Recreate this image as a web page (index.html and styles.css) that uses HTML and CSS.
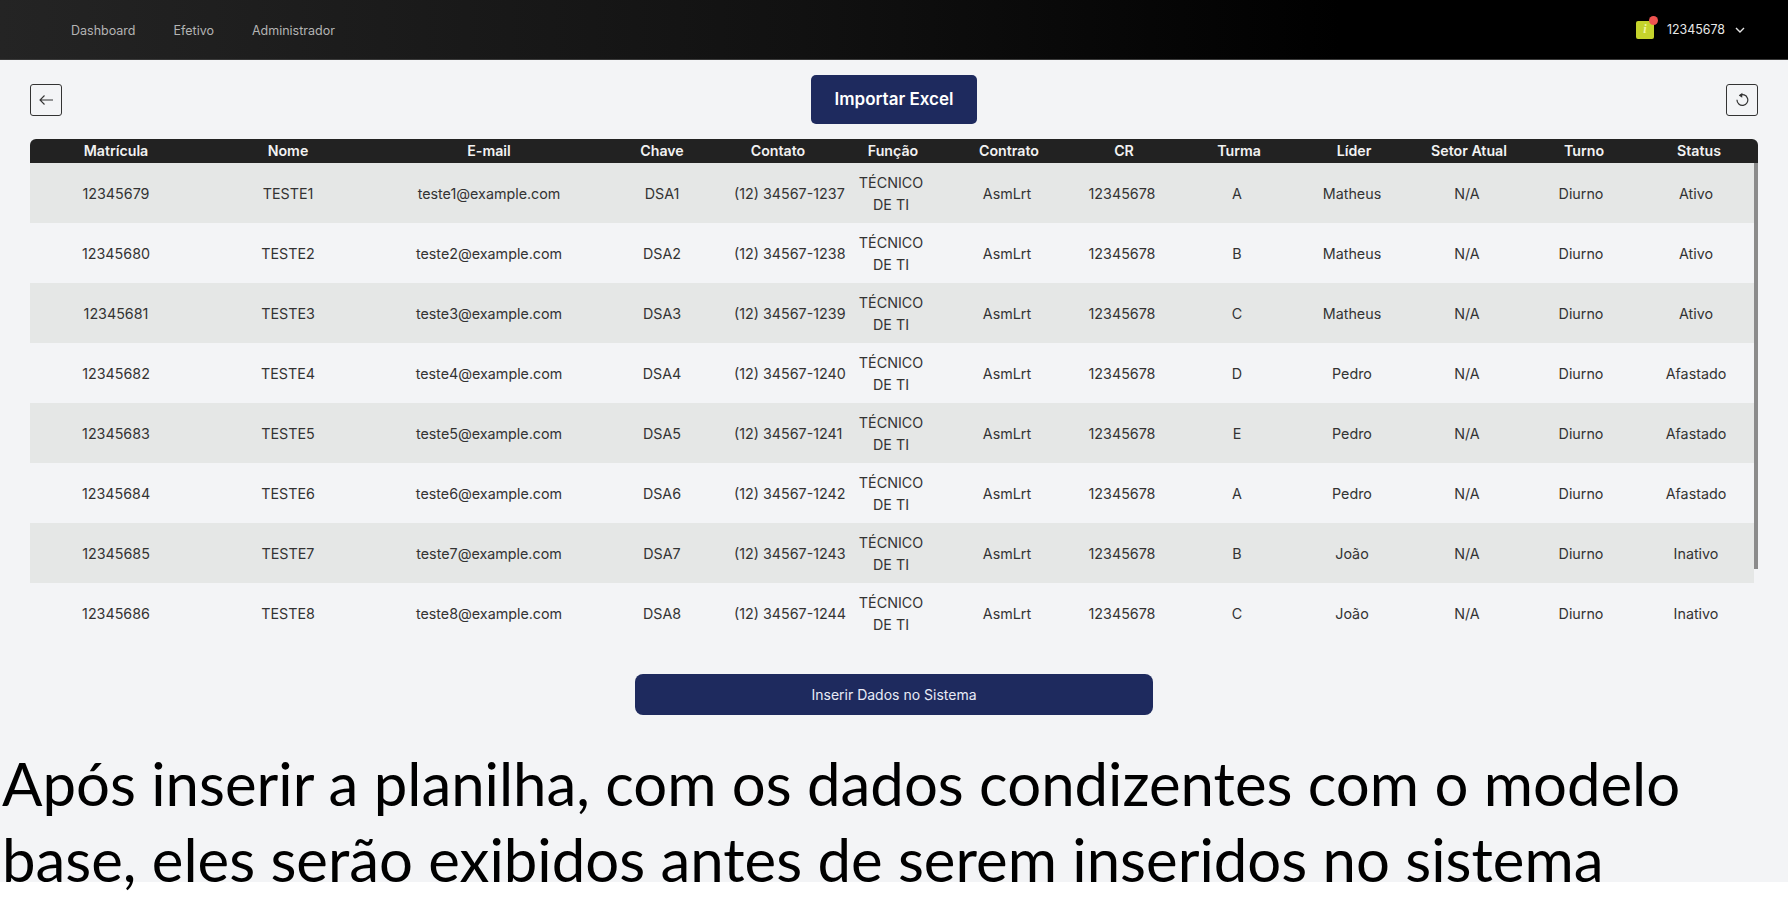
FILE: index.html
```html
<!DOCTYPE html>
<html lang="pt-BR">
<head>
  <meta charset="UTF-8">
  <title>Importar Excel</title>
  <link rel="stylesheet" href="styles.css">
</head>
<body>
  <nav class="navbar">
    <div class="nav-links">
      <a>Dashboard</a>
      <a>Efetivo</a>
      <a>Administrador</a>
    </div>
    <div class="nav-user">
      <span class="notify"><i>i</i><b class="notify-dot"></b></span>
      <span>12345678</span>
      <svg class="chevron" width="10" height="6" viewBox="0 0 10 6"><path d="M1 1l4 4 4-4" fill="none" stroke="#e5e5e5" stroke-width="1.4"/></svg>
    </div>
  </nav>

  <main class="page">
    <div class="toolbar">
      <button class="icon-btn">
        <svg width="16" height="12" viewBox="0 0 16 12"><path d="M15 6H2M6.5 1.5L2 6l4.5 4.5" fill="none" stroke="#333" stroke-width="1.1"/></svg>
      </button>
      <button class="import-btn">Importar Excel</button>
      <button class="icon-btn">
        <svg width="14" height="15" viewBox="0 0 14 15"><path d="M4.6 3.4a5.4 5.4 0 1 1-2.6 4.4" fill="none" stroke="#333" stroke-width="1.2"/><path d="M7.4 .8L3.8 3.4l3.4 2.4z" fill="#333"/></svg>
      </button>
    </div>

    <table class="grid head-table">
      <colgroup>
        <col class="h1"><col class="h2"><col class="h3"><col class="h4"><col class="h5"><col class="h6"><col class="h7"><col class="h8"><col class="h9"><col class="h10"><col class="h11"><col class="h12"><col class="h13">
      </colgroup>
      <thead>
        <tr><th>Matrícula</th><th>Nome</th><th>E-mail</th><th>Chave</th><th>Contato</th><th>Função</th><th>Contrato</th><th>CR</th><th>Turma</th><th>Líder</th><th>Setor Atual</th><th>Turno</th><th>Status</th></tr>
      </thead>
    </table>

    <div class="table-scroll">
      <span class="scroll-thumb"></span>
      <table class="grid body-table">
        <colgroup>
          <col class="b1"><col class="b2"><col class="b3"><col class="b4"><col class="b5"><col class="b6"><col class="b7"><col class="b8"><col class="b9"><col class="b10"><col class="b11"><col class="b12"><col class="b13">
        </colgroup>
        <tbody id="rows"></tbody>
      </table>
    </div>

    <div class="submit-row">
      <button class="submit-btn">Inserir Dados no Sistema</button>
    </div>

    <p class="caption">Após inserir a planilha, com os dados condizentes com o modelo base, eles serão exibidos antes de serem inseridos no sistema</p>
  </main>

  <script>
    const people = [
      ['A', 'Matheus', 'Ativo'],
      ['B', 'Matheus', 'Ativo'],
      ['C', 'Matheus', 'Ativo'],
      ['D', 'Pedro', 'Afastado'],
      ['E', 'Pedro', 'Afastado'],
      ['A', 'Pedro', 'Afastado'],
      ['B', 'João', 'Inativo'],
      ['C', 'João', 'Inativo']
    ];

    let html = '';
    people.forEach((p, i) => {
      const n = i + 1;
      html += `<tr>
        <td>${12345679 + i}</td><td>TESTE${n}</td><td>teste${n}@example.com</td><td>DSA${n}</td>
        <td class="nowrap">(12) 34567-${1237 + i}</td><td class="func">TÉCNICO DE TI</td><td>AsmLrt</td><td>12345678</td>
        <td>${p[0]}</td><td>${p[1]}</td><td>N/A</td><td>Diurno</td><td>${p[2]}</td>
      </tr>`;
    });
    document.getElementById('rows').innerHTML = html;
  </script>
</body>
</html>
```

FILE: styles.css
```css
html, body { margin: 0; padding: 0; height: 899px; overflow: hidden; background: #fff; }
body { font-family: Inter, "Liberation Sans", sans-serif; color: #2b2b2b; }

.navbar { height: 59px; border-bottom: 1px solid #3a3a3a; background: linear-gradient(90deg, #242424 0%, #111 45%, #000 75%); display: flex; align-items: center; justify-content: space-between; padding: 0 30px 0 71px; }
.nav-links { display: flex; gap: 38px; padding-top: 2px; }
.nav-links a { color: #b4b4b4; font-size: 12.5px; }
.nav-user { display: flex; align-items: center; color: #e8e8e8; font-size: 12.4px; margin-right: 13px; }
.notify { position: relative; width: 18px; height: 18px; margin-right: 13px; border-radius: 2px; background: #c5d32c; display: flex; align-items: center; justify-content: center; }
.notify i { color: #f3f6a0; font: italic bold 12px "Liberation Serif", serif; }
.notify-dot { position: absolute; top: -5px; right: -4px; width: 9px; height: 9px; border-radius: 50%; background: #ef5350; }
.chevron { margin-left: 10px; }

.page { height: 822px; background: #f3f4f6; }
.toolbar { display: flex; align-items: center; justify-content: space-between; padding: 15px 30px; height: 49px; }
.icon-btn { width: 32px; height: 32px; padding: 0; background: transparent; border: 1px solid #333; border-radius: 3px; display: flex; align-items: center; justify-content: center; }
.import-btn { width: 166px; height: 49px; padding: 0 0 2px; background: #1e2a5e; color: #fff; border: 0; border-radius: 5px; font-family: inherit; font-size: 17px; font-weight: 600; }

.grid { table-layout: fixed; border-collapse: collapse; text-align: center; }
.head-table { width: 1728px; margin-left: 30px; background: #222; border-radius: 6px 6px 0 0; overflow: hidden; }
.head-table th { height: 24px; padding: 0 0 2px; box-sizing: border-box; color: #f2f2f2; font-size: 14.2px; font-weight: 600; }
.h1, .h2 { width: 172px; } .h3 { width: 230px; } .h4, .h5 { width: 116px; } .h6 { width: 114px; }
.h7, .h9, .h11, .h13 { width: 118px; } .h8, .h10, .h12 { width: 112px; }

.table-scroll { position: relative; width: 1728px; height: 480px; margin-left: 30px; }
.scroll-thumb { position: absolute; top: 0; right: 0; width: 4px; height: 406px; background: #8b8b8b; }
.body-table { width: 1724px; }
.body-table td { height: 60px; padding: 1px 14px 0; font-size: 14.3px; line-height: 22px; color: #333; box-sizing: border-box; }
.body-table td.func { padding: 1px 22px 0; }
.body-table tr:nth-child(odd) { background: #e5e7e6; }
.nowrap { white-space: nowrap; }
.b1, .b2 { width: 172px; } .b3 { width: 230px; } .b4 { width: 116px; } .b5 { width: 112px; } .b6 { width: 118px; }
.b7, .b9, .b11, .b12 { width: 114px; } .b8, .b10, .b13 { width: 116px; }

.submit-row { display: flex; justify-content: center; padding-top: 31px; }
.submit-btn { width: 518px; height: 41px; background: #1e2a5e; color: #e8eaf6; border: 0; border-radius: 8px; font-family: inherit; font-size: 14px; }

.caption { margin: 30px 0 0; padding-left: 2px; width: 1720px; font-family: Lato, "Liberation Sans", sans-serif; font-size: 59.9px; line-height: 76px; color: #000; }
```
